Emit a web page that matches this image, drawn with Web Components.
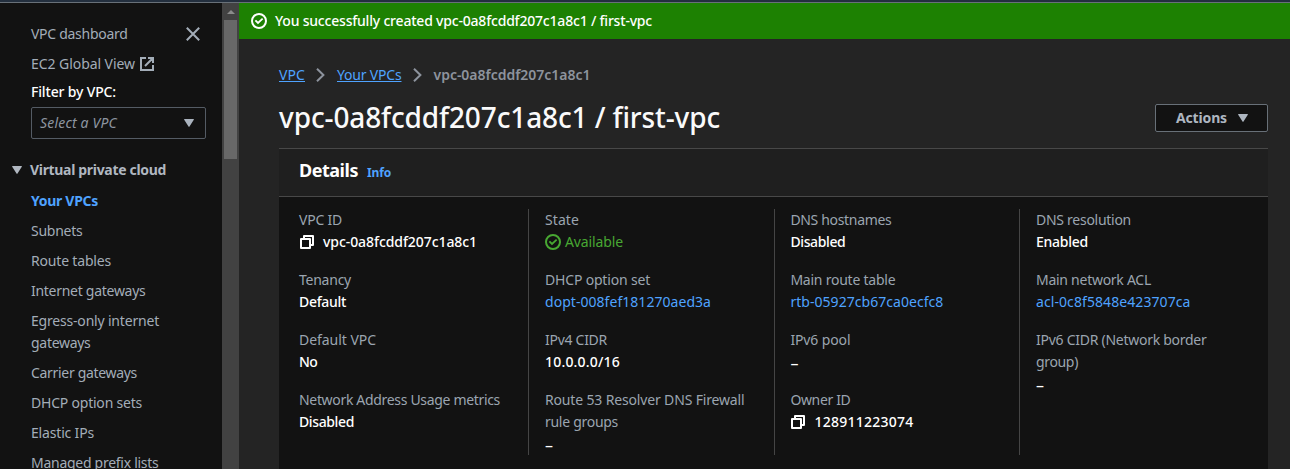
<!DOCTYPE html>
<html lang="en">
<head>
<meta charset="utf-8">
<title>VPC details</title>
<style>
  html, body { margin: 0; height: 469px; overflow: hidden; background: #242424; }
</style>
</head>
<body>
<vpc-app></vpc-app>
<script>
const ICONS = {
  check: '<svg width="16" height="16" viewBox="0 0 16 16" fill="none" stroke="currentColor" stroke-width="2"><circle cx="8" cy="8" r="7"/><path d="M5 8l2 2 4-3.8" stroke-linecap="square" stroke-width="1.8"/></svg>',
  copy: '<svg width="14" height="14" viewBox="0 0 14 14" fill="none" stroke="currentColor" stroke-width="2" stroke-linejoin="round"><path d="M1 4h9v9H1zM4 4V1h9v9h-3"/></svg>',
  external: '<svg width="14" height="14" viewBox="0 0 14 14" fill="none" stroke="currentColor" stroke-width="2"><path d="M6 1H1v12h12V8M8 1h5v5M13 1L5 9"/></svg>',
  close: '<svg width="14" height="14" viewBox="0 0 14 14" fill="none" stroke="currentColor" stroke-width="2"><path d="M.8.8l12.4 12.4M13.2.8L.8 13.2"/></svg>',
  chevron: '<svg width="9" height="14" viewBox="0 0 9 14" fill="none" stroke="currentColor" stroke-width="2"><path d="M1 .8L7.4 7 1 13.2"/></svg>',
  caret: '<svg width="10" height="8" viewBox="0 0 10 8" fill="currentColor"><path d="M.6 0h8.8q.8 0 .4.7L5.5 7.5q-.5.8-1 0L.2.7Q-.2 0 .6 0z"/></svg>',
  up: '<svg width="8" height="4" viewBox="0 0 8 4" fill="currentColor"><path d="M4 0l4 4H0z"/></svg>'
};
function define(name, html, setup) {
  customElements.define(name, class extends HTMLElement {
    connectedCallback() {
      if (this.shadowRoot) return;
      const t = document.createElement('template');
      t.innerHTML = typeof html === 'function' ? html(this) : html;
      this.attachShadow({ mode: 'open' }).append(t.content.cloneNode(true));
      if (setup) setup(this);
    }
  });
}

define('vpc-app', `
<style>
  :host { display: flex; flex-direction: column; width: 1290px; height: 469px; overflow: hidden;
    background: #242424; color: #d5dbdb; font: 14px/22px "Noto Sans", sans-serif; }
  .top { height: 2px; flex: none; background: #232f3e; border-bottom: 1px solid #687078; }
  .row { display: flex; flex: 1; min-height: 0; }
  main { flex: 1; min-width: 0; display: flex; flex-direction: column; }
  .content { padding: 25px 22px 0 40px; display: flex; flex-direction: column; flex: 1; min-height: 0; }
</style>
<div class="top"></div>
<div class="row">
  <side-nav></side-nav>
  <scroll-bar></scroll-bar>
  <main>
    <flash-bar><fit-text w="377">You successfully created vpc-0a8fcddf207c1a8c1 / first-vpc</fit-text></flash-bar>
    <div class="content">
      <bread-crumbs></bread-crumbs>
      <page-header><fit-text w="441">vpc-0a8fcddf207c1a8c1 / first-vpc</fit-text></page-header>
      <details-panel></details-panel>
    </div>
  </main>
</div>`);

define('ui-icon', el => `<style>:host{display:inline-flex;flex:none}svg{display:block}</style>${ICONS[el.getAttribute('name')]}`);

define('side-nav', `
<style>
  :host { display: block; box-sizing: border-box; width: 222px; flex: none; overflow: hidden;
    background: #121212; color: #a3adb8; padding: 20px 16px 0 31px; }
  .head { display: flex; justify-content: space-between; padding-right: 6px; align-items: center; }
  .ext { display: flex; align-items: center; gap: 5px; margin-top: 8px; }
  .filter { color: #fff; margin-top: 6px; font-weight: 500; }
  .select { display: flex; align-items: center; justify-content: space-between; box-sizing: border-box;
    height: 32px; margin-top: 4px; padding: 0 11px 0 8px; border: 1px solid #545b64; border-radius: 2px;
    font-style: italic; color: #8d95a0; }
  .select ui-icon { color: #aab3be; }
  .section { display: flex; align-items: center; gap: 8px; margin: 20px 0 9px -19px; font-weight: 700; color: #b0b7c0; }
  nav-item { margin-bottom: 8px; }
  nav-item[current] { color: #4fa3ff; font-weight: 700; }
</style>
<div class="head"><fit-text w="96.5">VPC dashboard</fit-text><ui-icon name="close"></ui-icon></div>
<div class="ext"><fit-text w="104">EC2 Global View</fit-text><ui-icon name="external"></ui-icon></div>
<div class="filter"><fit-text w="85">Filter by VPC:</fit-text></div>
<div class="select"><fit-text w="77">Select a VPC</fit-text><ui-icon name="caret"></ui-icon></div>
<div class="section"><ui-icon name="caret"></ui-icon><fit-text w="136">Virtual private cloud</fit-text></div>
<nav-item current><fit-text w="67">Your VPCs</fit-text></nav-item>
<nav-item><fit-text w="51.5">Subnets</fit-text></nav-item>
<nav-item><fit-text w="80">Route tables</fit-text></nav-item>
<nav-item><fit-text w="114.5">Internet gateways</fit-text></nav-item>
<nav-item><fit-text w="128">Egress-only internet</fit-text><fit-text w="59.5">gateways</fit-text></nav-item>
<nav-item><fit-text w="106">Carrier gateways</fit-text></nav-item>
<nav-item><fit-text w="111">DHCP option sets</fit-text></nav-item>
<nav-item><fit-text w="63">Elastic IPs</fit-text></nav-item>
<nav-item><fit-text w="127.5">Managed prefix lists</fit-text></nav-item>`);

define('nav-item', `<style>:host{display:flex;flex-direction:column;align-items:flex-start}</style><slot></slot>`);

define('scroll-bar', `
<style>
  :host { display: flex; flex-direction: column; align-items: center; box-sizing: border-box; width: 17px; flex: none;
    background: #424242; color: #8b8b8b; padding-top: 7px; }
  .thumb { width: 13px; height: 139px; margin-top: 6px; background: #686868; }
</style>
<ui-icon name="up"></ui-icon><div class="thumb"></div>`);

define('flash-bar', `
<style>
  :host { display: flex; align-items: center; gap: 8px; box-sizing: border-box; height: 36px; padding-left: 12px;
    background: #1d8102; color: #fff; font-weight: 500; }
</style>
<ui-icon name="check"></ui-icon><slot></slot>`);

define('bread-crumbs', `
<style>
  :host { display: flex; align-items: center; height: 22px; color: #8d939d; }
  a { color: #4fa3ff; text-decoration: underline; display: inline-block; }
  ui-icon { margin: 0 12px 0 11px; }
  b { font-weight: 600; }
</style>
<a><fit-text w="26">VPC</fit-text></a><ui-icon name="chevron"></ui-icon>
<a><fit-text w="64.5">Your VPCs</fit-text></a><ui-icon name="chevron"></ui-icon>
<b><fit-text w="157">vpc-0a8fcddf207c1a8c1</fit-text></b>`);

define('page-header', `
<style>
  :host { display: flex; align-items: center; justify-content: space-between; height: 36px; margin-top: 14px; }
  h1 { margin: 0 0 2px; font-size: 28px; line-height: 34px; font-weight: 500; color: #fafafa; }
  button { display: flex; align-items: center; gap: 11px; box-sizing: border-box; width: 113px; height: 28px; padding: 0 0 0 20px;
    background: #121212; border: 1px solid #687078; border-radius: 2px; color: #aeb6c0; font: 700 14px/22px "Noto Sans", sans-serif; }
</style>
<h1><slot></slot></h1>
<button><fit-text w="51">Actions</fit-text><ui-icon name="caret"></ui-icon></button>`);

define('details-panel', `
<style>
  :host { display: flex; flex-direction: column; flex: 1; margin-top: 12px; background: #121212; border-top: 1px solid #484848; }
  header { display: flex; align-items: baseline; gap: 9px; height: 47px; padding-left: 20px; background: #1f1f1f;
    border-bottom: 1px solid #484848; line-height: 42px; }
  h2 { margin: 0; font-size: 18px; font-weight: 700; color: #fff; }
  .info { font-size: 12px; font-weight: 700; color: #4fa3ff; }
  .grid { display: grid; grid-template-columns: 229px 246px 245px 249px; height: 246px; margin: 12px 0 0 20px; }
  .col { display: flex; flex-direction: column; gap: 16px; }
  .col + .col { border-left: 1px solid #454545; padding-left: 16px; }
  .col:nth-child(3) { padding-left: 15.4px; }
</style>
<header><h2><fit-text w="59">Details</fit-text></h2><span class="info"><fit-text w="24">Info</fit-text></span></header>
<div class="grid">
  <div class="col">
    <key-value><fit-text slot="k" w="43">VPC ID</fit-text><ui-icon name="copy"></ui-icon><fit-text w="154">vpc-0a8fcddf207c1a8c1</fit-text></key-value>
    <key-value><fit-text slot="k" w="52">Tenancy</fit-text><fit-text w="47">Default</fit-text></key-value>
    <key-value><fit-text slot="k" w="77">Default VPC</fit-text><fit-text w="18">No</fit-text></key-value>
    <key-value><fit-text slot="k" w="201">Network Address Usage metrics</fit-text><fit-text w="55">Disabled</fit-text></key-value>
  </div>
  <div class="col">
    <key-value kind="ok"><fit-text slot="k" w="34">State</fit-text><ui-icon name="check"></ui-icon><fit-text w="58">Available</fit-text></key-value>
    <key-value kind="link"><fit-text slot="k" w="105">DHCP option set</fit-text><fit-text w="166">dopt-008fef181270aed3a</fit-text></key-value>
    <key-value><fit-text slot="k" w="62">IPv4 CIDR</fit-text><fit-text w="75">10.0.0.0/16</fit-text></key-value>
    <key-value kind="empty"><fit-text slot="k" w="199.5">Route 53 Resolver DNS Firewall</fit-text><fit-text slot="k" w="73">rule groups</fit-text><fit-text w="8">–</fit-text></key-value>
  </div>
  <div class="col">
    <key-value><fit-text slot="k" w="101">DNS hostnames</fit-text><fit-text w="55">Disabled</fit-text></key-value>
    <key-value kind="link"><fit-text slot="k" w="105">Main route table</fit-text><fit-text w="153">rtb-05927cb67ca0ecfc8</fit-text></key-value>
    <key-value kind="empty"><fit-text slot="k" w="60">IPv6 pool</fit-text><fit-text w="8">–</fit-text></key-value>
    <key-value><fit-text slot="k" w="60">Owner ID</fit-text><ui-icon name="copy"></ui-icon><fit-text w="99">128911223074</fit-text></key-value>
  </div>
  <div class="col">
    <key-value><fit-text slot="k" w="95">DNS resolution</fit-text><fit-text w="52">Enabled</fit-text></key-value>
    <key-value kind="link"><fit-text slot="k" w="115">Main network ACL</fit-text><fit-text w="154.5">acl-0c8f5848e423707ca</fit-text></key-value>
    <key-value kind="empty"><fit-text slot="k" w="170.5">IPv6 CIDR (Network border</fit-text><fit-text slot="k" w="42">group)</fit-text><fit-text w="8">–</fit-text></key-value>
  </div>
</div>`);

define('key-value', `
<style>
  :host { display: block; }
  .k { display: flex; flex-direction: column; align-items: flex-start; color: #9ba5b0; }
  .v { display: flex; align-items: center; height: 22px; color: #fff; font-weight: 500; }
  :host([kind=link]) .v { color: #4fa3ff; font-weight: 400; }
  :host([kind=ok]) .v { color: #48a832; font-weight: 400; }
  :host([kind=empty]) .v { box-sizing: border-box; padding-top: 2px; font-weight: 400; font-size: 16px; }
  ::slotted(ui-icon[name=copy]) { margin: 0 9px 0 1px; }
  ::slotted(ui-icon[name=check]) { margin: 0 4px 0 0; }
</style>
<div class="k"><slot name="k"></slot></div><div class="v"><slot></slot></div>`);

/* One line of text whose tracking is adjusted so that it is w pixels wide. */
define('fit-text', `<style>:host{display:inline-block;white-space:nowrap;text-decoration:inherit}</style><slot></slot>`, el => {
  const n = el.textContent.length, w = parseFloat(el.getAttribute('w'));
  const natural = el.getBoundingClientRect().width;
  if (n > 1 && natural) el.style.letterSpacing = ((w - natural) / n).toFixed(3) + 'px';
});
</script>
</body>
</html>
